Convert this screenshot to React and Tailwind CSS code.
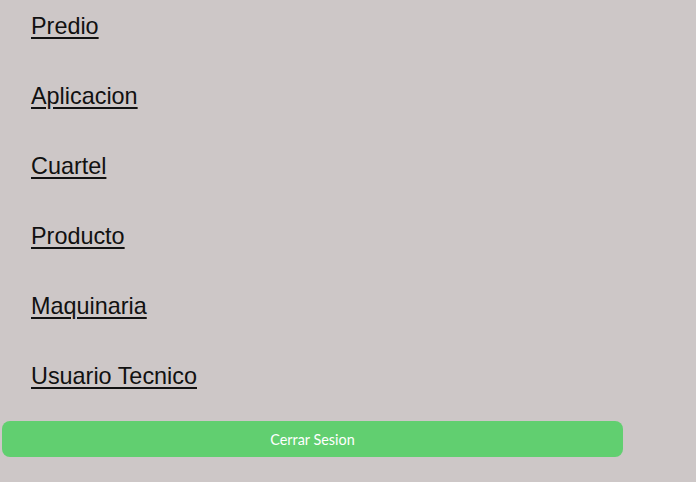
const links = ['Predio', 'Aplicacion', 'Cuartel', 'Producto', 'Maquinaria', 'Usuario Tecnico'];

export default function App() {
  return (
    <div className="w-[696px] h-[482px] bg-[#cdc7c7] overflow-hidden pt-[13px]">
      <nav className="flex flex-col gap-[44px] pl-[31px]">
        {links.map((l) => (
          <a
            key={l}
            href="#"
            className="self-start text-[23.4px] leading-[26px] text-[#111] underline underline-offset-[3px] font-['Liberation_Sans',Arial,sans-serif]"
          >
            {l}
          </a>
        ))}
      </nav>
      <button className="mt-[32px] ml-[2px] w-[621px] h-[36px] pt-[2px] rounded-[8px] bg-[#61cf70] text-white text-[14.4px] font-['Lato',sans-serif]">
        Cerrar Sesion
      </button>
    </div>
  );
}
